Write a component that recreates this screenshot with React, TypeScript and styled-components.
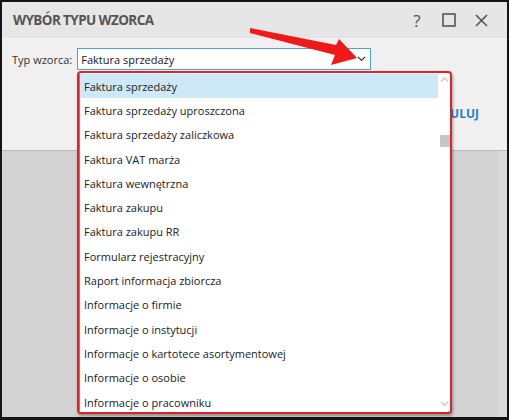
import React from "react";
import styled, {createGlobalStyle} from "styled-components";

const Global = createGlobalStyle`
    html, body {
        margin: 0;
        padding: 0;
        background: #ffffff;
    }
    * {
        box-sizing: border-box;
    }
`

const Frame = styled.div`
    position: relative;
    width: 509px;
    height: 420px;
    border: 2px solid #141414;
    border-bottom-width: 3px;
    background: #d3d3d3;
    display: flex;
    flex-direction: column;
    font-family: 'Open Sans', 'Noto Sans', sans-serif;
    overflow: hidden;
`
const TitleBar = styled.div`
    height: 36px;
    background: #e6e6e6;
    display: flex;
    align-items: center;
    padding: 0 10px 0 11px;
`
const Title = styled.div`
    font-weight: 700;
    font-size: 13.5px;
    letter-spacing: -0.6px;
    color: #555555;
    margin-right: auto;
`
const TitleButton = styled.button`
    width: 32px;
    height: 30px;
    border: none;
    background: none;
    padding: 0;
    display: flex;
    align-items: center;
    justify-content: center;
    color: #555555;
    font-family: 'Open Sans', sans-serif;
    font-size: 17px;
`
const Body = styled.div`
    height: 113px;
    background: #f0f0f0;
    border-bottom: 1px solid #b9b9b9;
    padding: 10px 12px 0 10px;
    display: flex;
    flex-direction: column;
`
const FieldRow = styled.div`
    display: flex;
    align-items: center;
    column-gap: 5px;
`
const Label = styled.div`
    font-size: 11px;
    color: #333333;
`
const Select = styled.div`
    width: 294px;
    height: 22px;
    background: #ffffff;
    border: 1px solid #4aa3dc;
    display: flex;
    align-items: center;
    padding: 0 4px 0 3px;
    font-size: 11px;
    color: #1c1616;
`
const SelectValue = styled.span`
    margin-right: auto;
`
const Footer = styled.div`
    margin-top: 35px;
    display: flex;
    justify-content: flex-end;
    padding-right: 16px;
`
const TextButton = styled.div`
    font-weight: 700;
    font-size: 12px;
    color: #1f82cc;
`
const Backdrop = styled.div`
    flex: 1;
    display: flex;
    justify-content: flex-end;
`
const BackdropEdge = styled.div`
    width: 9px;
    background: #dadada;
`
const Dropdown = styled.div`
    position: absolute;
    left: 75px;
    top: 69px;
    width: 375px;
    height: 343px;
    border: 2px solid #e2222b;
    border-radius: 4px;
    background: #ffffff;
    box-shadow: 1px 2px 3px rgba(0, 0, 0, 0.35);
    display: flex;
    overflow: hidden;
`
const List = styled.div`
    flex: 1;
    border-left: 1px solid #3f9ad6;
    padding-top: 1px;
    display: flex;
    flex-direction: column;
`
const Item = styled.div<{ $active?: boolean }>`
    height: 24.3px;
    flex: none;
    display: flex;
    align-items: center;
    padding-left: 4px;
    font-size: 11px;
    color: #222222;
    background: ${props => props.$active ? "#cde8f6" : "transparent"};
`
const ScrollBar = styled.div`
    width: 12px;
    display: flex;
    flex-direction: column;
    align-items: center;
    padding-top: 4px;
`
const ScrollThumb = styled.div`
    width: 10px;
    height: 12px;
    margin-top: 53px;
    margin-left: 1px;
    background: #c6c6c6;
`
const ScrollSpacer = styled.div`
    flex: 1;
`
const Arrow = styled.svg`
    position: absolute;
    left: 0;
    top: 0;
    pointer-events: none;
`

const items = [
	"Faktura sprzedaży",
	"Faktura sprzedaży uproszczona",
	"Faktura sprzedaży zaliczkowa",
	"Faktura VAT marża",
	"Faktura wewnętrzna",
	"Faktura zakupu",
	"Faktura zakupu RR",
	"Formularz rejestracyjny",
	"Raport informacja zbiorcza",
	"Informacje o firmie",
	"Informacje o instytucji",
	"Informacje o kartotece asortymentowej",
	"Informacje o osobie",
	"Informacje o pracowniku",
]

const Chevron = (props: { up?: boolean, color: string, size: number }) => (
	<svg width={props.size} height={props.size * 0.6} viewBox="0 0 10 6">
		<path d={props.up ? "M1 5 L5 1 L9 5" : "M1 1 L5 5 L9 1"} fill="none" stroke={props.color} strokeWidth="1.3"/>
	</svg>
)

export default function App() {
	return (
		<>
			<Global/>
			<Frame>
				<TitleBar>
					<Title>WYBÓR TYPU WZORCA</Title>
					<TitleButton>?</TitleButton>
					<TitleButton>
						<svg width="14" height="14" viewBox="0 0 14 14">
							<rect x="1" y="1" width="12" height="12" fill="none" stroke="#555" strokeWidth="1.6"/>
						</svg>
					</TitleButton>
					<TitleButton>
						<svg width="13" height="13" viewBox="0 0 13 13">
							<path d="M1 1 L12 12 M12 1 L1 12" stroke="#555" strokeWidth="1.6"/>
						</svg>
					</TitleButton>
				</TitleBar>
				<Body>
					<FieldRow>
						<Label>Typ wzorca:</Label>
						<Select>
							<SelectValue>Faktura sprzedaży</SelectValue>
							<Chevron color="#333" size={9}/>
						</Select>
					</FieldRow>
					<Footer>
						<TextButton>ANULUJ</TextButton>
					</Footer>
				</Body>
				<Backdrop>
					<BackdropEdge/>
				</Backdrop>
				<Dropdown>
					<List>
						{items.map((item, i) => <Item key={item} $active={i === 0}>{item}</Item>)}
					</List>
					<ScrollBar>
						<Chevron up color="#c4c4c4" size={9}/>
						<ScrollThumb/>
						<ScrollSpacer/>
						<Chevron color="#c4c4c4" size={9}/>
						<div style={{height: 6}}/>
					</ScrollBar>
				</Dropdown>
				<Arrow width="509" height="420" viewBox="0 0 509 420">
					<polygon points="248,26 334,43 337,37 355,56 329,63 333,53 248,31" fill="#f01818"/>
				</Arrow>
			</Frame>
		</>
	)
}
